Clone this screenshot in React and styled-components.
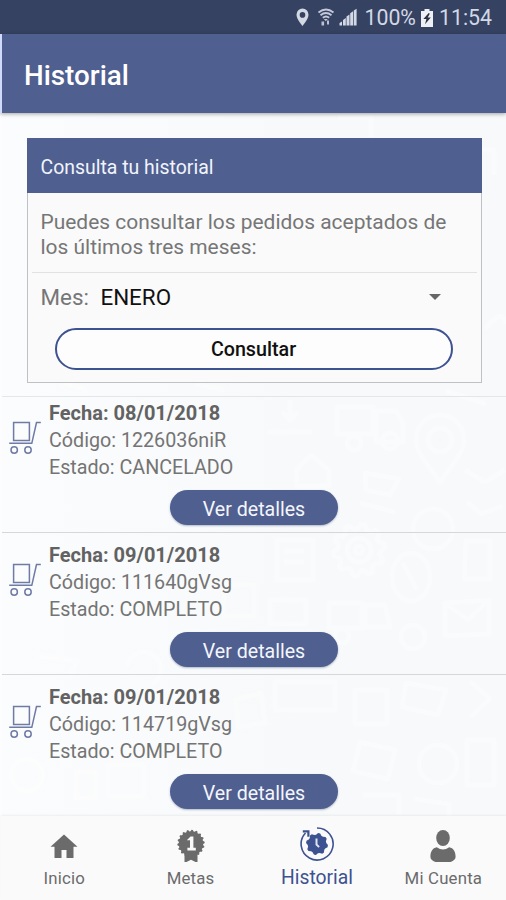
import React from 'react';
import styled, { createGlobalStyle, css } from 'styled-components';

const theme = {
  blue: '#4f5f90',
  darkBlue: '#364262',
  outline: '#3d5290',
  gray: '#767676',
  icon: '#6b6b6b',
  surface: '#fafafb',
  line: '#e0e2e4',
};

const GlobalStyle = createGlobalStyle`
  * {
    box-sizing: border-box;
  }

  body {
    margin: 0;
    background: #fdfdff;
    font-family: Roboto, "Liberation Sans", sans-serif;
  }
`;

const Screen = styled.div`
  height: 900px;
  display: flex;
  flex-direction: column;
  overflow: hidden;
`;

const StatusBar = styled.div`
  flex: none;
  height: 34px;
  padding: 1px 14px 0 0;
  display: flex;
  align-items: center;
  justify-content: flex-end;
  background: ${theme.darkBlue};
  color: #d3d8e5;
  font-size: 21.3px;
  line-height: 34px;

  svg {
    flex: none;
  }
`;

const StatusText = styled.span`
  margin-left: ${({ $left }) => $left}px;
`;

const AppBar = styled.header`
  position: relative;
  z-index: 1;
  flex: none;
  height: 79px;
  padding: 4px 0 0 22px;
  display: flex;
  align-items: center;
  border-left: 2px solid #cfdafc;
  background: ${theme.blue};
  box-shadow: 0 1px 4px rgba(0, 0, 0, 0.35);
  color: #fff;
  font-size: 27.8px;
  font-weight: 500;
`;

const Content = styled.main`
  position: relative;
  z-index: 0;
  flex: 1;
  min-height: 0;
  margin-left: 2px;
  background: linear-gradient(90deg, #fbfcfd, #f7f9fa 60%);
`;

const Doodles = styled.svg`
  position: absolute;
  z-index: -1;
  top: 0;
  left: 0;
`;

const Card = styled.section`
  height: 245px;
  margin: 25px 24.5px 0 24.5px;
  border: 1px solid #bfc2c5;
  background: ${theme.surface};
`;

const CardTitle = styled.h2`
  height: 55px;
  margin: -1px -1px 0;
  padding: 4px 0 0 14px;
  display: flex;
  align-items: center;
  background: ${theme.blue};
  color: #f1f4fb;
  font-size: 19.45px;
  font-weight: 400;
`;

const CardText = styled.p`
  height: 80px;
  margin: 0 4px;
  padding: 16.5px 0 0 9px;
  border-bottom: 1px solid ${theme.line};
  color: ${theme.gray};
  font-size: 20.95px;
  line-height: 25px;
  white-space: nowrap;
`;

const MonthRow = styled.div`
  height: 50px;
  padding: 0 40px 2px 13px;
  display: flex;
  align-items: center;
  color: ${theme.gray};
  font-size: 22.4px;
`;

const MonthValue = styled.span`
  flex: 1;
  margin-left: 11.5px;
  color: #111;
`;

const Caret = styled.span`
  border: 6.5px solid transparent;
  border-top-color: #666;
  border-bottom-width: 0;
`;

const QueryButton = styled.button`
  display: block;
  width: 398px;
  height: 42px;
  margin: 5px 0 0 27px;
  padding: 1px 0 0;
  border: 2.5px solid ${theme.outline};
  border-radius: 21px;
  background: #fdfdfd;
  color: #111;
  font: 500 19.7px Roboto, sans-serif;
`;

const OrderList = styled.ul`
  margin: 13px 0 0;
  padding: 0;
  border-top: 1px solid #e3e7ea;
  list-style: none;
`;

const OrderItem = styled.li`
  height: 142px;
  padding: 8px 0 0 6px;
  display: grid;
  grid-template-columns: 41px 1fr;
  grid-template-rows: 91px 35px;
  border-bottom: 1px solid #d5d8da;

  &:first-child {
    height: 136px;
    padding-top: 2px;
  }

  &:last-child {
    border-bottom: 0;
  }
`;

const CartIcon = styled.svg`
  margin-top: 22px;
`;

const OrderInfo = styled.div`
  padding-top: 1px;
`;

const OrderLine = styled.div`
  height: 27px;
  color: ${({ $strong }) => ($strong ? '#626262' : '#747474')};
  font-size: ${({ $strong }) => ($strong ? '20px' : '19.7px')};
  font-weight: ${({ $strong }) => ($strong ? 700 : 400)};
  line-height: 27px;
`;

const DetailButton = styled.button`
  grid-column: 1 / -1;
  justify-self: center;
  width: 168px;
  height: 35px;
  margin-right: 6px;
  padding: 3px 0 0;
  border: 0;
  border-radius: 18px;
  background: ${theme.blue};
  box-shadow: 0 1px 2px rgba(50, 65, 110, 0.35);
  color: #f4f6fc;
  font: 400 19.6px Roboto, sans-serif;
`;

const BottomNav = styled.nav`
  position: relative;
  z-index: 1;
  flex: none;
  height: 84px;
  margin-left: 1px;
  display: grid;
  grid-template-columns: repeat(4, 126.4px);
  background: ${theme.surface};
  box-shadow: 0 -1px 2px rgba(0, 0, 0, 0.06);
`;

const NavItem = styled.a`
  display: flex;
  flex-direction: column;
  align-items: center;
  padding-top: 10px;
  color: ${theme.icon};
  font-size: 16.8px;
  letter-spacing: 0.2px;
  line-height: 24px;

  svg {
    flex: none;
    margin-bottom: 4px;
  }

  ${({ $active }) => $active && css`
    color: ${theme.outline};
    font-size: 19.3px;
    letter-spacing: 0;
    line-height: 23px;
  `}
`;

const orders = [
  { date: '08/01/2018', code: '1226036niR', status: 'CANCELADO' },
  { date: '09/01/2018', code: '111640gVsg', status: 'COMPLETO' },
  { date: '09/01/2018', code: '114719gVsg', status: 'COMPLETO' },
];

// points of a toothed circle, alternating between two radii
const toothed = (cx, cy, outer, inner, teeth) => {
  const points = [];
  for (let i = 0; i < teeth * 4; i++) {
    const r = i % 4 < 2 ? outer : inner;
    const a = ((i + 0.5) / (teeth * 4)) * Math.PI * 2 - Math.PI / 2;
    points.push(`${(cx + r * Math.cos(a)).toFixed(2)},${(cy + r * Math.sin(a)).toFixed(2)}`);
  }
  return points.join(' ');
};

const StatusIcons = () => (
  <svg width="62" height="34" viewBox="298 0.5 62 34" fill="#d3d8e5">
    <path fillRule="evenodd" d="M304.500 8a6 6.300 0 0 0-6 6.300c0 4.500 6 11.200 6 11.200s6-6.700 6-11.200a6 6.300 0 0 0-6-6.300zm0 3.600a2.800 2.800 0 1 1 0 5.600 2.800 2.800 0 0 1 0-5.600z" />
    <path d="M320.500 12q7.500-6 15 0M322.500 14.700q5.500-4.500 11 0M324.800 17.300q3.200-2.600 6.400 0" fill="none" stroke="#c3c9d8" strokeWidth="1.800" />
    <path d="M325.800 18.500h4l-2 2.200zM323.500 21h2.600v4h-2.600zM329 20h2v4h-2z" opacity=".85" />
    <path d="M341.500 22.500l2.500-1.500v4h-2.500zM345 19.500l2.800-2v7.500H345zM348.500 16l3-2v11h-3zM352.200 12.700l2.900-1.900V25h-2.900zM355.800 10l2.800-1.800V25h-2.800z" />
  </svg>
);

const Battery = () => (
  <svg width="14" height="18" viewBox="0 0 14 18" style={{ marginLeft: 4 }}>
    <path fill="#eef0f5" d="M4.500 0h5v2H13v16H1V2h3.500z" />
    <path fill="#2b3040" d="M8.700 4L3.400 9.900h3L5 15.300l5.800-6.700H7.700L9.800 4.700z" />
  </svg>
);

const Cart = () => (
  <CartIcon width="34" height="35" viewBox="0 0 34 35" fill="none" stroke="#6f7ba6" strokeWidth="1.500">
    <path d="M5.600 1.600h15.800v17.800H5.600z" />
    <path d="M32.800 1.500h-4.300L23.800 22.300H1.200" strokeWidth="1.500" />
    <circle cx="6.200" cy="29" r="3.200" />
    <circle cx="20" cy="29" r="3.200" />
  </CartIcon>
);

const HomeIcon = () => (
  <svg width="36" height="36" viewBox="0 0 36 36" fill={theme.icon}>
    <path d="M18 8.500L4.500 20.800h4V32h7v-8h5v8h7V20.800h4z" />
  </svg>
);

const MedalIcon = () => (
  <svg width="36" height="36" viewBox="0 0 36 36" fill={theme.icon}>
    <polygon points={toothed(18, 17.500, 13.700, 12.200, 18)} />
    <path d="M11.500 27h13v10l-6.500-3.300-6.500 3.300z" />
    <path fill="#fafafb" d="M14 14l3.500-3.600h2.900v11.300h2.400v2.900h-8.400v-2.900h2.600v-7.500H14z" />
  </svg>
);

const HistoryIcon = () => (
  <svg width="36" height="36" viewBox="0 0 36 36" fill={theme.outline}>
    <polygon points={toothed(18, 18, 11, 9.300, 8)} />
    <path d="M18 2a16 16 0 1 1-11.500 5" fill="none" stroke={theme.outline} strokeWidth="1.600" />
    <path d="M3.800 5.400h5.600v5.400" fill="none" stroke={theme.outline} strokeWidth="2.200" />
    <path d="M17.500 12.500v6l2.600 2.600" fill="none" stroke="#dfe4f2" strokeWidth="2" />
  </svg>
);

const UserIcon = () => (
  <svg width="36" height="36" viewBox="0 0 36 36" fill={theme.icon}>
    <ellipse cx="18" cy="12" rx="6.800" ry="8" />
    <path d="M11.800 21.300q6.200 4.400 12.400 0c4.300.8 6.400 4.500 6.400 9.500 0 3.800-4.600 6.200-12.600 6.200S5.400 34.600 5.400 30.800c0-5 2.100-8.700 6.400-9.500z" />
  </svg>
);

const navItems = [
  { label: 'Inicio', icon: HomeIcon },
  { label: 'Metas', icon: MedalIcon },
  { label: 'Historial', icon: HistoryIcon, active: true },
  { label: 'Mi Cuenta', icon: UserIcon },
];

// faint white delivery doodles behind the list
const Background = () => (
  <Doodles width="504" height="703" viewBox="2 113 504 703" fill="none" stroke="#fff" strokeWidth="5" strokeLinejoin="round" opacity=".42">
    <path d="M337 407h36v27h-36zM376 411h20l7 12v19h-27z" />
    <circle cx="354" cy="443" r="7" />
    <circle cx="390" cy="441" r="8" />
    <path d="M440 482c-15-21-24-30-24-43a24 24 0 0 1 48 0c0 13-9 22-24 43z" />
    <circle cx="440" cy="440" r="12" />
    <path d="M290 400v20M268 432h44M282 412l8 8 8-8M296 470l15-15 18 15v16h-32z" />
    <path d="M365 473l34 6-9 16-24-5zM360 503l35 9M465 470l20 12 20-12M467 502l14 12 22-8" />
    <polygon points={toothed(359, 550, 26, 21, 10)} />
    <circle cx="359" cy="550" r="12" />
    <circle cx="359" cy="550" r="4" />
    <path d="M277 540h36v40h-36zM284 551h20M284 562h20M466 541h24v38h-26z" />
    <circle cx="433" cy="529" r="20" />
    <ellipse cx="411" cy="577" rx="19" ry="24" />
    <path d="M403 563l14 27M270 600h36v24h-36zM329 603h33v25h-33zM365 605h20l5 22h-25z" />
    <circle cx="342" cy="636" r="7" />
    <circle cx="413" cy="637" r="12" />
    <path d="M445 603l44-3v34l-44 2zM445 603l23 17 21-20" />
    <path d="M275 682h60v28h-60zM355 690h32v34h-32zM406 683l40 7-8 25-36-8zM470 681l20 18-20 18" />
    <circle cx="438" cy="764" r="19" />
    <path d="M360 742l35 8-7 29-35-8zM467 740h27v45h-27zM363 795h36v20M414 799l35 5v12" />
    <path d="M39 656l38 5-6 16M127 666a17 17 0 1 1 25 18" />
    <circle cx="27" cy="775" r="16" />
    <path d="M76 772h20v26H76zM108 765h36v31h-36zM235 700l26-7 4 30-26 4zM224 585h30v31h-30z" />
    <path d="M446 391l40 13M485 329q18-22 21-5M470 150h24v25M338 117h33v20M62 382l25 8M195 384l30 6" />
  </Doodles>
);

const App = () => (
  <>
    <GlobalStyle />
    <Screen>
      <StatusBar>
        <StatusIcons />
        <StatusText $left={6}>100%</StatusText>
        <Battery />
        <StatusText $left={5}>11:54</StatusText>
      </StatusBar>
      <AppBar>Historial</AppBar>

      <Content>
        <Background />
        <Card>
          <CardTitle>Consulta tu historial</CardTitle>
          <CardText>
            Puedes consultar los pedidos aceptados de<br />
            los últimos tres meses:
          </CardText>
          <MonthRow>
            Mes:
            <MonthValue>ENERO</MonthValue>
            <Caret />
          </MonthRow>
          <QueryButton>Consultar</QueryButton>
        </Card>

        <OrderList>
          {orders.map((order) => (
            <OrderItem key={order.code}>
              <Cart />
              <OrderInfo>
                <OrderLine $strong>Fecha: {order.date}</OrderLine>
                <OrderLine>Código: {order.code}</OrderLine>
                <OrderLine>Estado: {order.status}</OrderLine>
              </OrderInfo>
              <DetailButton>Ver detalles</DetailButton>
            </OrderItem>
          ))}
        </OrderList>
      </Content>

      <BottomNav>
        {navItems.map(({ label, icon: Icon, active }) => (
          <NavItem key={label} $active={active}>
            <Icon />
            {label}
          </NavItem>
        ))}
      </BottomNav>
    </Screen>
  </>
);

export default App;
